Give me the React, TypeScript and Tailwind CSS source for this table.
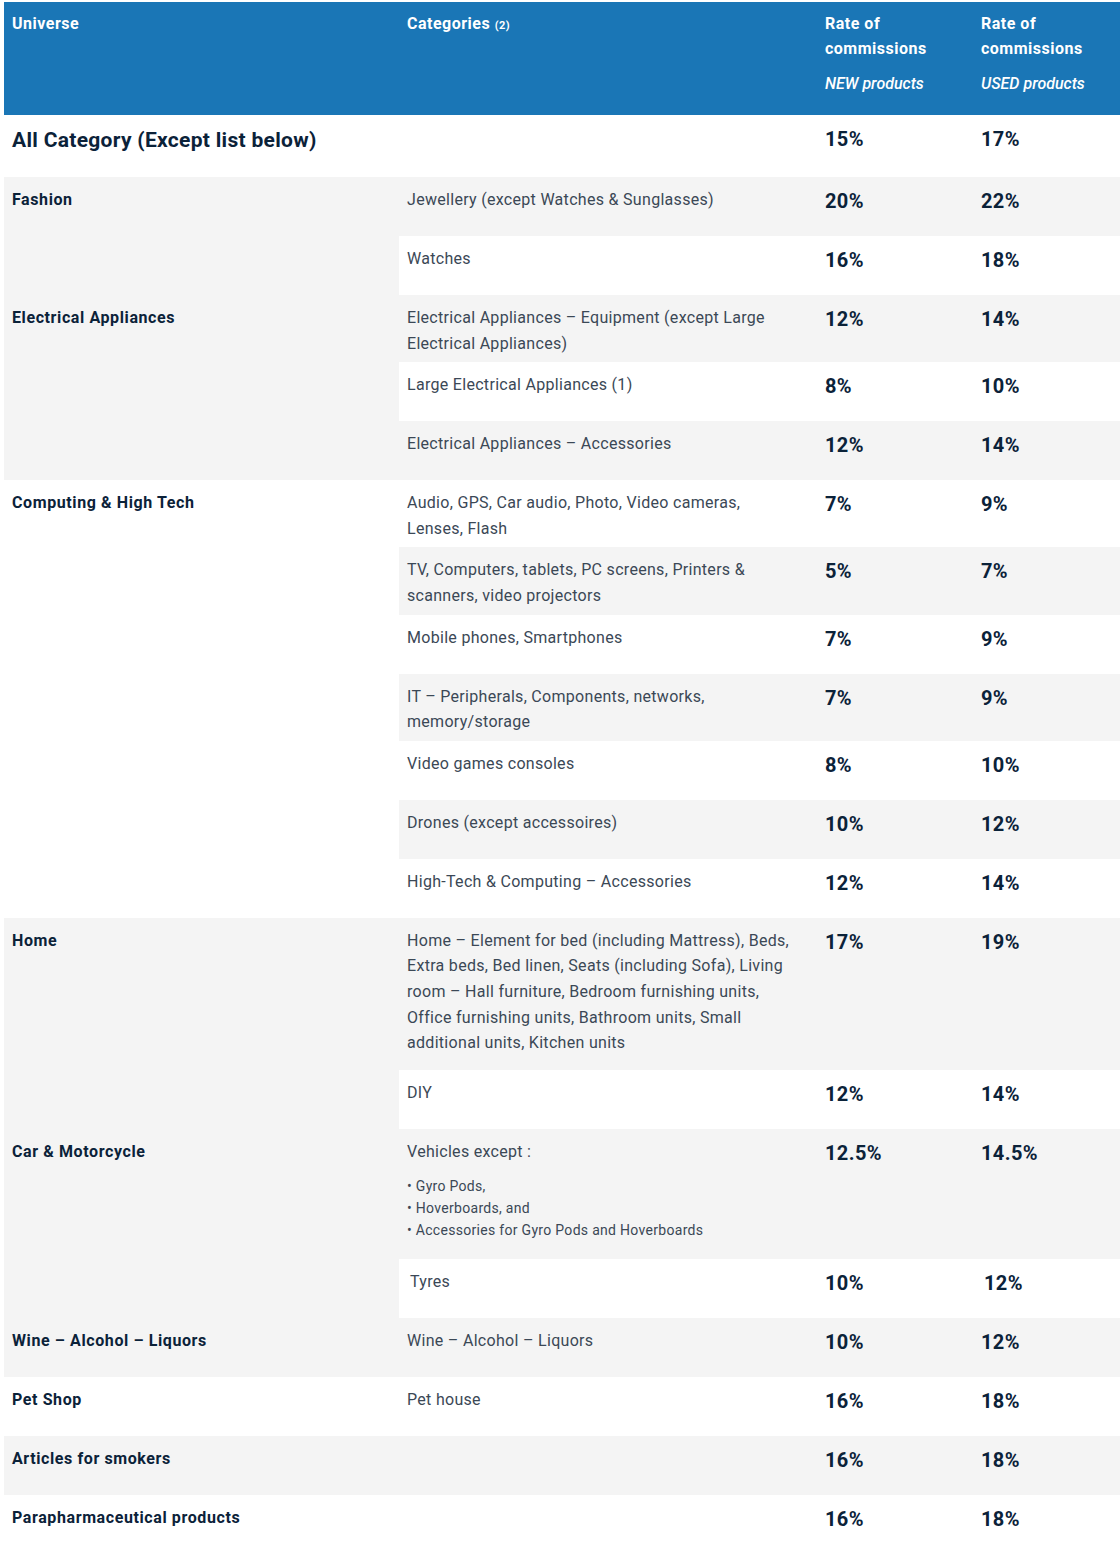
type Row = { cat: string; n: string; u: string; extra?: string }
type Group = { universe: string; rows: Row[] }

const groups: Group[] = [
  {
    universe: "Fashion",
    rows: [
      { cat: "Jewellery (except Watches & Sunglasses)", n: "20%", u: "22%" },
      { cat: "Watches", n: "16%", u: "18%" },
    ],
  },
  {
    universe: "Electrical Appliances",
    rows: [
      { cat: "Electrical Appliances – Equipment (except Large\nElectrical Appliances)", n: "12%", u: "14%" },
      { cat: "Large Electrical Appliances (1)", n: "8%", u: "10%" },
      { cat: "Electrical Appliances – Accessories", n: "12%", u: "14%" },
    ],
  },
  {
    universe: "Computing & High Tech",
    rows: [
      { cat: "Audio, GPS, Car audio, Photo, Video cameras,\nLenses, Flash", n: "7%", u: "9%" },
      { cat: "TV, Computers, tablets, PC screens, Printers &\nscanners, video projectors", n: "5%", u: "7%" },
      { cat: "Mobile phones, Smartphones", n: "7%", u: "9%" },
      { cat: "IT – Peripherals, Components, networks,\nmemory/storage", n: "7%", u: "9%" },
      { cat: "Video games consoles", n: "8%", u: "10%" },
      { cat: "Drones (except accessoires)", n: "10%", u: "12%" },
      { cat: "High-Tech & Computing – Accessories", n: "12%", u: "14%" },
    ],
  },
  {
    universe: "Home",
    rows: [
      {
        cat: "Home – Element for bed (including Mattress), Beds,\nExtra beds, Bed linen, Seats (including Sofa), Living\nroom – Hall furniture, Bedroom furnishing units,\nOffice furnishing units, Bathroom units, Small\nadditional units, Kitchen units",
        n: "17%",
        u: "19%",
        extra: "home",
      },
      { cat: "DIY", n: "12%", u: "14%" },
    ],
  },
  {
    universe: "Car & Motorcycle",
    rows: [
      { cat: "Vehicles except :", n: "12.5%", u: "14.5%", extra: "vehicles" },
      { cat: "Tyres", n: "10%", u: "12%", extra: "tyres" },
    ],
  },
  { universe: "Wine – Alcohol – Liquors", rows: [{ cat: "Wine – Alcohol – Liquors", n: "10%", u: "12%" }] },
  { universe: "Pet Shop", rows: [{ cat: "Pet house", n: "16%", u: "18%" }] },
  { universe: "Articles for smokers", rows: [{ cat: "", n: "16%", u: "18%" }] },
  { universe: "Parapharmaceutical products", rows: [{ cat: "", n: "16%", u: "18%" }] },
]

function Pct({ value, shift }: { value: string; shift?: boolean }) {
  return (
    <div
      className={`pb-[10px] text-[20px] font-bold leading-[33px] tracking-[0.4px] text-[#0b2239] ${shift ? "pl-[3px]" : ""}`}
    >
      {value}
    </div>
  )
}

function Category({ row }: { row: Row }) {
  if (row.extra === "vehicles") {
    return (
      <div className="pb-[12px]">
        <p className="mb-[11px]">{row.cat}</p>
        <div className="whitespace-pre text-[14px] leading-[22px]">
          {"• Gyro Pods,\n• Hoverboards, and\n• Accessories for Gyro Pods and Hoverboards"}
        </div>
      </div>
    )
  }
  return (
    <div className={`whitespace-pre ${row.extra === "home" ? "pb-[8px]" : ""} ${row.extra === "tyres" ? "pl-[3px]" : ""}`}>
      {row.cat}
    </div>
  )
}

export default function App() {
  let idx = 0
  const stripe = (i: number) => (i % 2 === 1 ? "bg-[#f4f4f4]" : "bg-white")

  return (
    <div className="min-h-[1556px] bg-white pt-[2px] pl-1 font-['Roboto',sans-serif]">
      <table className="w-[1116px] table-fixed border-collapse text-left text-[16px] leading-[25.6px]">
        <colgroup>
          <col className="w-[395px]" />
          <col className="w-[418px]" />
          <col className="w-[156px]" />
          <col />
        </colgroup>
        <thead>
          <tr className="bg-[#1a76b6] text-white">
            <th className="h-[113px] px-2 pt-[9px] pb-[7px] align-top font-bold tracking-[0.5px]">Universe</th>
            <th className="px-2 pt-[9px] pb-[7px] align-top font-bold tracking-[0.5px]">
              Categories <span className="text-[11px]">(2)</span>
            </th>
            <th className="px-2 pt-[9px] pb-[7px] align-top font-bold leading-[25px] tracking-[0.5px]">
              Rate of
              <br />
              commissions
              <p className="mt-[10px] font-medium italic tracking-[0px]">NEW products</p>
            </th>
            <th className="px-2 pt-[9px] pb-[7px] align-top font-bold leading-[25px] tracking-[0.5px]">
              Rate of
              <br />
              commissions
              <p className="mt-[10px] font-medium italic tracking-[0px]">USED products</p>
            </th>
          </tr>
        </thead>
        <tbody>
          {(() => {
            const out = []
            const first = idx++
            out.push(
              <tr key="all" className={stripe(first)}>
                <td className="p-2 align-top">
                  <div className="pt-[1px] text-[21px] font-bold leading-[33px] tracking-[0.3px] text-[#0b2239]">
                    All Category (Except list below)
                  </div>
                </td>
                <td className="p-2 align-top" />
                <td className="p-2 align-top">
                  <div className="pb-[13px] text-[20px] font-bold leading-[33px] tracking-[0.4px] text-[#0b2239]">15%</div>
                </td>
                <td className="p-2 align-top">
                  <div className="pb-[13px] text-[20px] font-bold leading-[33px] tracking-[0.4px] text-[#0b2239]">17%</div>
                </td>
              </tr>
            )
            groups.forEach((g, gi) => {
              const groupStripe = stripe(idx)
              g.rows.forEach((r, ri) => {
                const bg = stripe(idx++)
                out.push(
                  <tr key={`${gi}-${ri}`}>
                    {ri === 0 && (
                      <td
                        rowSpan={g.rows.length}
                        className={`px-2 pt-[10px] pb-[6px] align-top font-bold tracking-[0.6px] text-[#0b2239] ${groupStripe}`}
                      >
                        {g.universe}
                      </td>
                    )}
                    <td className={`px-2 pt-[10px] pb-[6px] align-top tracking-[0.3px] text-[#3b4856] ${bg}`}>
                      <Category row={r} />
                    </td>
                    <td className={`p-2 align-top ${bg}`}>
                      <Pct value={r.n} />
                    </td>
                    <td className={`p-2 align-top ${bg}`}>
                      <Pct value={r.u} shift={r.extra === "tyres"} />
                    </td>
                  </tr>
                )
              })
            })
            return out
          })()}
        </tbody>
      </table>
    </div>
  )
}
